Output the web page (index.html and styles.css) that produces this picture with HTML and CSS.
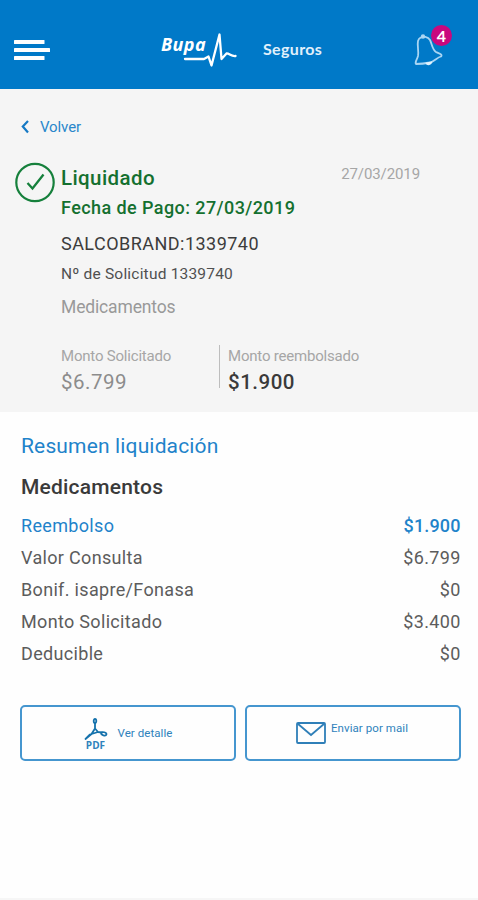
FILE: index.html
```html
<!DOCTYPE html>
<html lang="es">
<head>
<meta charset="utf-8">
<title>Bupa Seguros</title>
<link rel="stylesheet" href="styles.css">
</head>
<body>
<header class="topbar">
  <svg class="menu" width="36" height="22" viewBox="0 0 36 22" fill="#fff">
    <rect x="0" y="1" width="30.500" height="4" rx=".6"/><rect x="0" y="9" width="36" height="4" rx=".6"/><rect x="0" y="17" width="30.500" height="4" rx=".6"/>
  </svg>
  <div class="logo">
    <span class="brand">Bupa</span>
    <svg class="pulse" width="54" height="36" viewBox="0 0 54 36" fill="none" stroke="#fff" stroke-width="2.300" stroke-linecap="round" stroke-linejoin="round"><path d="M2 27H21L25.500 24.500L28.500 33.500L36.500 2.500L38.500 27L43.500 21.500C46 21 48 24.500 52.500 24"/></svg>
  </div>
  <span class="product">Seguros</span>
  <div class="alerts">
    <svg width="30" height="33" viewBox="0 0 30 33" fill="none" stroke="#a9d5f3" stroke-width="1.800" stroke-linecap="round" stroke-linejoin="round"><path d="M6 4C9 2 14 2.500 16 6C18 10 18 15 22 18C25 19.500 29 20.500 27 22.500C23 23.500 21 27 16 28.500C11 29.500 6 30 2 30C.5 28 3 26 4 22C5 17 3 12 4 7C4.500 5.500 5 4.500 6 4Z"/><circle cx="9" cy="2.500" r="1.300" fill="#c4e2f7"/><path d="M12.500 29.400Q15.500 31.500 17.500 28.300Z" fill="#e2f2fd" stroke="#e2f2fd"/></svg>
    <span class="badge">4</span>
  </div>
</header>

<section class="claim">
  <a class="back"><svg width="8" height="14" viewBox="0 0 8 14" fill="none" stroke="#1679c4" stroke-width="2.200"><path d="M7 1L1.800 6.500L7 12.500"/></svg><span>Volver</span></a>
  <div class="claim-body">
    <svg class="status" width="42" height="42" viewBox="0 0 42 42" fill="none" stroke="#16803c"><circle cx="21" cy="20.500" r="18.700" stroke-width="2.200"/><path d="M13.500 21L18.500 26.500L29.500 12.500" stroke-width="2.300"/></svg>
    <div class="info">
      <div class="title"><span class="state">Liquidado</span><span class="date">27/03/2019</span></div>
      <div class="paid">Fecha de Pago: 27/03/2019</div>
      <div class="provider">SALCOBRAND:1339740</div>
      <div class="request">Nº de Solicitud 1339740</div>
      <div class="kind">Medicamentos</div>
      <div class="amounts">
        <div class="amount"><span class="label">Monto Solicitado</span><span class="value">$6.799</span></div>
        <div class="amount refunded"><span class="label">Monto reembolsado</span><span class="value">$1.900</span></div>
      </div>
    </div>
  </div>
</section>

<main class="detail">
  <h1>Resumen liquidación</h1>
  <h2>Medicamentos</h2>
  <div class="row highlight"><span>Reembolso</span><span class="num">$1.900</span></div>
  <div class="row"><span>Valor Consulta</span><span class="num">$6.799</span></div>
  <div class="row"><span>Bonif. isapre/Fonasa</span><span class="num">$0</span></div>
  <div class="row"><span>Monto Solicitado</span><span class="num">$3.400</span></div>
  <div class="row"><span>Deducible</span><span class="num">$0</span></div>
  <div class="actions">
    <button class="btn pdf">
      <span class="pdf-icon"><svg width="24" height="23" viewBox="0 0 24 23" fill="none" stroke="#1572ac" stroke-width="1.800" stroke-linecap="round" stroke-linejoin="round"><ellipse cx="11" cy="3" rx="1.300" ry="2"/><path d="M11 5V10.500L7.500 16L1.500 21L6 16.500L14 14M11 10.500L14 14L18 14.500"/><ellipse cx="19.800" cy="15.800" rx="2.700" ry="1.600" transform="rotate(15 19.800 15.800)"/></svg><span>PDF</span></span>
      <span class="btn-text">Ver detalle</span>
    </button>
    <button class="btn mail">
      <svg width="30" height="22" viewBox="0 0 30 22" fill="none" stroke="#2f7fb8" stroke-width="1.800"><rect x="1" y="1" width="28" height="20" rx="1"/><path d="M1.500 1.500L15 13L28.500 1.500"/></svg>
      <span class="btn-text">Enviar por mail</span>
    </button>
  </div>
</main>
<footer class="edge"></footer>
</body>
</html>
```
FILE: styles.css
```css
* { box-sizing: border-box; }
body {
  margin: 0;
  height: 900px;
  display: flex;
  flex-direction: column;
  background: #fefefe;
  font-family: Roboto, "Liberation Sans", sans-serif;
  color: #5c5c5c;
}
.topbar {
  height: 89px;
  flex: none;
  display: flex;
  align-items: flex-start;
  background: #0079c8;
  color: #fff;
}
.menu { margin: 39px 0 0 14px; }
.logo { position: relative; width: 77px; height: 36px; margin: 32px 0 0 111px; }
.brand {
  display: block;
  font: italic 700 18px/24px "Open Sans", sans-serif;
  letter-spacing: .4px;
}
.pulse { position: absolute; left: 22px; top: 0; }
.product {
  margin: 37px 0 0 25px;
  width: 62px;
  font: 700 16px/24px Lato, sans-serif;
  letter-spacing: .35px;
  color: #e0f0fb;
}
.alerts { position: relative; margin: 34px 0 0 89px; height: 33px; }
.badge {
  position: absolute;
  left: 17px;
  top: -9px;
  width: 21px;
  height: 21px;
  border-radius: 50%;
  background: #c9087e;
  font: 700 16px/21px Lato, sans-serif;
  text-align: center;
}
.claim { height: 323px; flex: none; background: #f5f5f5; padding: 25px 0 0 14px; }
.back {
  display: flex;
  align-items: center;
  gap: 11px;
  height: 25px;
  padding-left: 7px;
  font-size: 15px;
  letter-spacing: -.1px;
  color: #2a87cb;
}
.claim-body { display: flex; gap: 5px; padding-top: 23px; }
.status { flex: none; }
.info { flex: 1; padding-top: 3px; }
.title { display: flex; justify-content: space-between; height: 26px; padding-right: 58px; }
.state { font-size: 20.500px; line-height: 26px; font-weight: 500; letter-spacing: .4px; color: #14702f; }
.date { font-size: 15px; line-height: 18px; letter-spacing: -.1px; color: #a6a6a6; }
.paid { font-size: 18px; line-height: 34px; font-weight: 500; letter-spacing: .42px; color: #14702f; }
.provider { font-size: 18px; line-height: 38px; letter-spacing: .47px; color: #3c3c3c; }
.request { font-size: 15.500px; line-height: 22px; letter-spacing: .2px; color: #505050; }
.kind { font-size: 17.500px; line-height: 45px; letter-spacing: -.15px; color: #999; }
.amounts { display: flex; padding-top: 15px; }
.amount { display: flex; flex-direction: column; width: 158px; height: 43px; }
.label { font-size: 15px; line-height: 24px; letter-spacing: -.2px; color: #a6a6a6; margin-top: -1px; }
.value { font-size: 20.500px; line-height: 28px; letter-spacing: .5px; color: #8c8c8c; }
.refunded { border-left: 1px solid #bdbdbd; padding-left: 8px; }
.refunded .value { color: #3a3a3a; font-weight: 500; }
.detail { padding: 18px 18px 0 21px; flex: 1; }
h1, h2 { margin: 0; }
h1 { font-size: 21px; line-height: 32px; font-weight: 400; letter-spacing: .15px; color: #1f83ca; }
h2 { font-size: 21px; line-height: 51px; font-weight: 500; letter-spacing: .2px; color: #3a3a3a; margin-bottom: -3px; }
.row { display: flex; justify-content: space-between; font-size: 18px; line-height: 32px; letter-spacing: .33px; }
.num { margin-right: -.6px; }
.highlight { color: #1f83ca; }
.highlight .num { font-weight: 500; letter-spacing: .15px; }
.actions { display: flex; gap: 9px; margin: 35px -1px 0 -1px; }
.btn {
  flex: 1;
  height: 56px;
  display: flex;
  justify-content: center;
  padding: 0;
  border: 2px solid #4596cf;
  border-radius: 5px;
  background: #fefefe;
  font: 11.500px/16px Roboto, sans-serif;
  letter-spacing: .07px;
  color: #2f82bc;
}
.pdf-icon { display: flex; flex-direction: column; align-items: center; width: 24px; font: 700 10px/8px "Open Sans", sans-serif; margin-top: 11px; }
.pdf .btn-text { margin: 18px 0 0 10px; }
.mail svg { margin: 15px 0 0 -2px; }
.mail .btn-text { margin: 13px 0 0 5px; }
.edge { height: 2px; background: #f6f6f6; }
```
